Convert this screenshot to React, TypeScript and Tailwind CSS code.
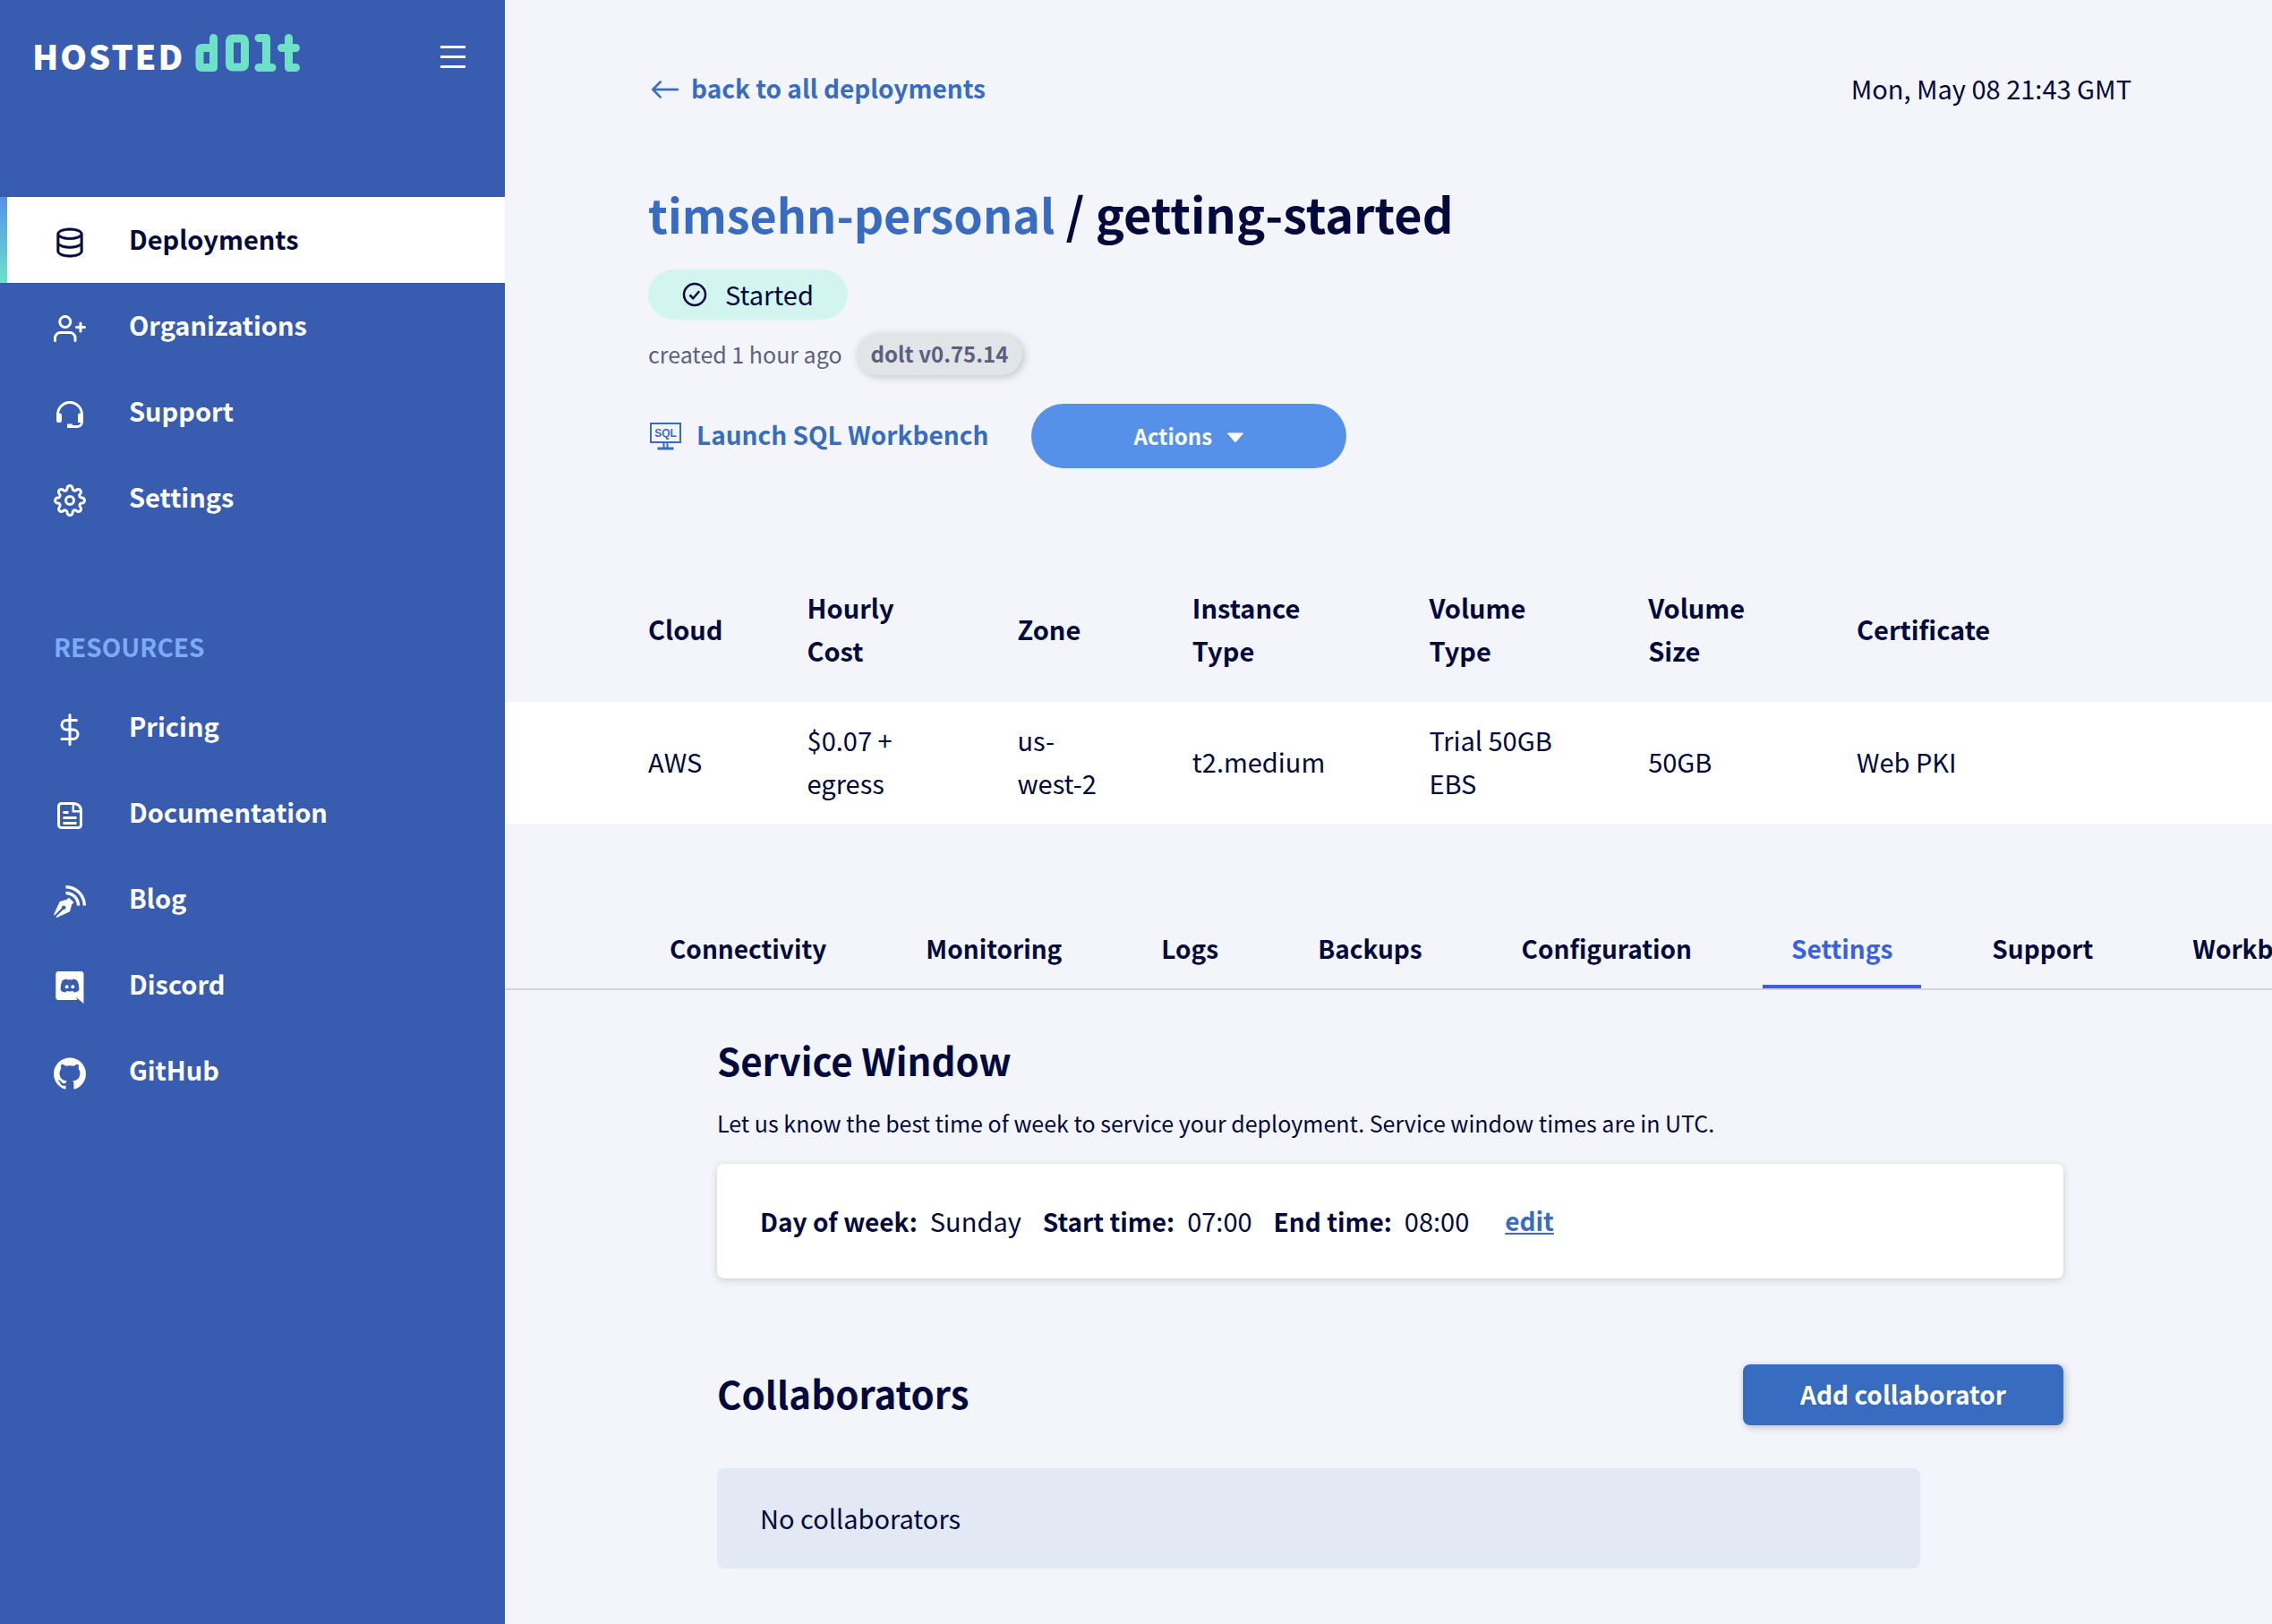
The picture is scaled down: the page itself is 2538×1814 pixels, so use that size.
import type { ReactNode } from "react";
import { BsArrowLeft } from "react-icons/bs";
import { FiDollarSign, FiSettings, FiUserPlus } from "react-icons/fi";
import { GoDatabase } from "react-icons/go";
import { ImBlog } from "react-icons/im";
import { SiGithub } from "react-icons/si";

function HeadsetIcon() {
  return (
    <svg viewBox="0 0 24 24" className="size-9" fill="none" stroke="currentColor" strokeWidth="1.900">
      <path d="M3 12.500V12a9 9 0 0 1 18 0v5.500c0 2-1.300 3.500-3.500 3.500H13.500" />
      <path d="M2 11h2.500q1.500 0 1.500 1.500v4q0 1.500-1.500 1.500h-1q-1.500 0-1.500-1.500z" fill="currentColor" stroke="none" />
      <path d="M22 11h-2.500q-1.500 0-1.500 1.500V18h2.500q1.500 0 1.500-1.500z" fill="currentColor" stroke="none" />
      <path d="M10 19h4v3h-4z" fill="currentColor" stroke="none" />
    </svg>
  );
}

function DocumentIcon() {
  return (
    <svg viewBox="0 0 24 24" className="size-9" fill="none" stroke="currentColor" strokeWidth="2">
      <path d="M5.700 3H15q5.300.5 5.300 5.500V19a2 2 0 0 1-2 2H5.700a2 2 0 0 1-2-2V5a2 2 0 0 1 2-2z" />
      <path d="M14.500 3v5.800h5.800" strokeWidth="1.600" />
      <path d="M7 9.700h4M7 13.700h10M7 17.700h10" />
    </svg>
  );
}

function DiscordIcon() {
  return (
    <svg viewBox="0 0 24 24" className="size-9" fill="currentColor">
      <path
        fillRule="evenodd"
        d="M3.500 0h17A2 2 0 0 1 22.300 2V24l-5.500-4.600.7 2H3.700A2.200 2.200 0 0 1 1.500 19.200V2.200A2.200 2.200 0 0 1 3.500 0zM9.800 5.700c-1.300.1-2.500.6-3.300 1.200C5.400 9 5 11.200 5.100 13.900c.8 1.200 2.100 1.800 3.700 1.800l.8-1c1.500.4 3.300.4 4.800 0l.8 1c1.600 0 2.900-.6 3.700-1.800.1-2.700-.3-4.900-1.400-7-.8-.6-2-1.100-3.300-1.200l-.4.6c-1.100-.2-2.500-.2-3.600 0z"
      />
      <circle cx="9.800" cy="11.500" r="1.300" />
      <circle cx="14.200" cy="11.500" r="1.300" />
    </svg>
  );
}

function CheckCircleIcon() {
  return (
    <svg viewBox="0 0 28 28" className="size-7" fill="none" stroke="currentColor" strokeWidth="2.500">
      <circle cx="14" cy="14" r="12" />
      <path d="M8.500 14.500l3.700 3.700 7-8" />
    </svg>
  );
}

function SqlMonitorIcon() {
  return (
    <svg viewBox="0 0 38 32" className="h-8 w-[38px]" fill="none" stroke="currentColor" strokeWidth="2">
      <path d="M3 2h33v21H3zM17.500 23v6M21.500 23v6" />
      <path d="M10.500 30h18" strokeWidth="3" />
      <text
        x="19.500"
        y="16.500"
        textAnchor="middle"
        fontSize="12"
        fontWeight="700"
        fill="currentColor"
        stroke="none"
        fontFamily="Liberation Sans, sans-serif"
      >
        SQL
      </text>
    </svg>
  );
}

function DoltMark() {
  return (
    <svg
      viewBox="0 0 118 42"
      className="mt-0.5 h-[42px] w-[118px] text-[#6de2c6]"
      role="img"
      aria-label="dolt"
      fill="none"
      stroke="currentColor"
      strokeWidth="9"
      strokeLinecap="round"
      strokeLinejoin="round"
    >
      <path d="M20.500 4.500v33h-13q-2.500 0-2.500-2.500V18q0-2.500 2.500-2.500h13" />
      <path d="M42 5h10q3.500 0 3.500 3.500v25q0 3.500-3.500 3.500H42q-3.500 0-3.500-3.500v-25Q38.500 5 42 5z" />
      <path d="M71 4.500h8.500v33M71 37.500h15" />
      <path d="M104.500 4.500v33h8M96.500 15.500h16" />
    </svg>
  );
}

type NavItem = { label: string; icon: ReactNode; active?: boolean };

const mainNav: NavItem[] = [
  { label: "Deployments", icon: <GoDatabase className="size-9" strokeWidth="0.5" />, active: true },
  { label: "Organizations", icon: <FiUserPlus className="size-9" /> },
  { label: "Support", icon: <HeadsetIcon /> },
  { label: "Settings", icon: <FiSettings className="size-9" /> },
];

const resourceNav: NavItem[] = [
  { label: "Pricing", icon: <FiDollarSign className="size-9" /> },
  { label: "Documentation", icon: <DocumentIcon /> },
  { label: "Blog", icon: <ImBlog className="size-9" /> },
  { label: "Discord", icon: <DiscordIcon /> },
  { label: "GitHub", icon: <SiGithub className="size-9" /> },
];

function NavList({ items }: { items: NavItem[] }) {
  return (
    <ul>
      {items.map((item) => (
        <li key={item.label}>
          <a
            href="#"
            aria-current={item.active ? "page" : undefined}
            className={
              item.active
                ? "flex h-24 items-center bg-white text-[#020a3d]"
                : "flex h-24 items-center text-white"
            }
          >
            <span
              className={
                item.active
                  ? "h-full w-2 bg-linear-to-b from-[#5590e9] to-[#6de2c6]"
                  : "h-full w-2"
              }
            />
            <span className="mr-12 ml-[52px] pt-1.5">{item.icon}</span>
            <span className="pb-1 text-[29px] leading-[48px] font-bold">{item.label}</span>
          </a>
        </li>
      ))}
    </ul>
  );
}

function Sidebar() {
  return (
    <aside className="w-[564px] shrink-0 bg-[#385cb0]">
      <div className="flex h-[220px] items-start justify-between pt-9 pr-11 pl-9">
        <a href="#" className="flex items-start gap-3 text-white">
          <span className="pt-0.5 text-[38px] leading-[48px] font-black tracking-wider">HOSTED</span>
          <DoltMark />
        </a>
        <button type="button" aria-label="Toggle menu" className="mt-[15px] flex flex-col gap-2">
          <span className="h-[3px] w-7 bg-white" />
          <span className="h-[3px] w-7 bg-white" />
          <span className="h-[3px] w-7 bg-white" />
        </button>
      </div>
      <nav aria-label="Main">
        <NavList items={mainNav} />
      </nav>
      <nav aria-label="Resources">
        <h2 className="mt-[94px] mb-[18px] pl-[60px] text-[28px] leading-[48px] font-bold text-[#7bacf5]">
          RESOURCES
        </h2>
        <NavList items={resourceNav} />
      </nav>
    </aside>
  );
}

const columns = [
  { name: "Cloud", value: "AWS", cell: "w-[17.1%] pr-20 pl-40" },
  { name: "Hourly Cost", value: "$0.07 + egress", cell: "w-[11.9%] pr-20" },
  { name: "Zone", value: "us-west-2", cell: "w-[9.9%] pr-24" },
  { name: "Instance Type", value: "t2.medium", cell: "w-[13.4%] pr-20" },
  { name: "Volume Type", value: "Trial 50GB EBS", cell: "w-[12.4%] pr-20" },
  { name: "Volume Size", value: "50GB", cell: "w-[11.8%] pr-20" },
  { name: "Certificate", value: "Web PKI", cell: "pr-20" },
];

function DetailsTable() {
  return (
    <table className="mt-[131px] w-full table-fixed text-left text-[29px] leading-[48px]">
      <thead>
        <tr>
          {columns.map((c) => (
            <th key={c.name} scope="col" className={c.cell + " pb-[34px] align-middle font-bold"}>
              {c.name}
            </th>
          ))}
        </tr>
      </thead>
      <tbody>
        <tr className="bg-white">
          {columns.map((c) => (
            <td key={c.name} className={c.cell + " pt-[18px] pb-[22px] align-middle"}>
              {c.value}
            </td>
          ))}
        </tr>
      </tbody>
    </table>
  );
}

const tabs = [
  "Connectivity",
  "Monitoring",
  "Logs",
  "Backups",
  "Configuration",
  "Settings",
  "Support",
  "Workbench",
];

function Tabs() {
  return (
    <nav
      aria-label="Deployment"
      className="mt-[115px] flex gap-[47px] overflow-hidden border-b-2 border-[#d3d5dd] pl-[152px]"
    >
      {tabs.map((tab) => (
        <a
          key={tab}
          href="#"
          className={
            tab === "Settings"
              ? "shrink-0 border-b-4 border-[#3860e4] px-8 pb-[17px] text-[28px] leading-[48px] font-bold text-[#3860e4]"
              : "shrink-0 border-b-4 border-transparent px-8 pb-[17px] text-[28px] leading-[48px] font-bold"
          }
        >
          {tab}
        </a>
      ))}
    </nav>
  );
}

function ServiceWindow() {
  return (
    <section>
      <h2 className="text-[42px] leading-[60px] font-bold">Service Window</h2>
      <p className="mt-5 text-[25px] leading-10">
        Let us know the best time of week to service your deployment. Service window times are in UTC.
      </p>
      <div className="mt-[26px] flex h-32 items-center rounded-lg bg-white px-12 pb-0.5 text-[29px] leading-[48px] shadow-[0_2px_8px_rgba(30,50,70,0.2)]">
        <dl className="flex gap-6">
          <div className="flex items-baseline gap-3.5">
            <dt className="text-[28px] font-bold">Day of week:</dt>
            <dd>Sunday</dd>
          </div>
          <div className="flex items-baseline gap-3.5">
            <dt className="text-[28px] font-bold">Start time:</dt>
            <dd>07:00</dd>
          </div>
          <div className="flex items-baseline gap-3.5">
            <dt className="text-[28px] font-bold">End time:</dt>
            <dd>08:00</dd>
          </div>
        </dl>
        <a href="#" className="ml-10 text-[28px] font-bold text-[#376cc0] underline">
          edit
        </a>
      </div>
    </section>
  );
}

function Collaborators() {
  return (
    <section className="mt-24">
      <div className="flex items-center justify-between">
        <h2 className="pb-1 text-[42px] leading-[60px] font-bold">Collaborators</h2>
        <button
          type="button"
          className="h-[68px] rounded-lg bg-[#376cc0] px-16 pb-0.5 text-[28px] leading-[48px] font-bold text-white shadow-[2px_2px_8px_rgba(30,50,70,0.3)]"
        >
          Add collaborator
        </button>
      </div>
      <p className="mt-12 mr-40 flex h-28 items-center rounded-lg bg-[#e2e9f5] px-12 pb-0.5 text-[29px] leading-[48px]">
        No collaborators
      </p>
    </section>
  );
}

export default function App() {
  return (
    <div className="flex min-h-screen bg-[#f4f5fa] font-['Noto_Sans_CJK_SC','Source_Sans_Pro',sans-serif] text-[#020a3d]">
      <Sidebar />
      <main className="min-w-0 flex-1 pt-[74px]">
        <header className="pr-[157px] pl-40">
          <div className="flex items-center justify-between text-[29px] leading-[48px]">
            <a href="#" className="flex items-center gap-3 text-[28px] font-bold text-[#376cc0]">
              <BsArrowLeft className="mt-1 ml-0.5 size-[34px]" strokeWidth="0.3" />
              back to all deployments
            </a>
            <time>Mon, May 08 21:43 GMT</time>
          </div>
          <h1 className="mt-20 text-[54px] leading-[72px] font-bold">
            <a href="#" className="text-[52px] text-[#376cc0]">
              timsehn-personal
            </a>{" "}
            / getting-started
          </h1>
          <div className="mt-[26px] flex">
            <span className="flex h-14 items-center gap-5 rounded-full bg-[#d3f5ef] px-[38px] text-[29px] leading-[48px]">
              <CheckCircleIcon />
              <span className="pb-0.5">Started</span>
            </span>
          </div>
          <div className="mt-4 flex items-center gap-4 text-[25px] leading-[44px] text-[#5c6080]">
            <span className="pb-0.5">created 1 hour ago</span>
            <span className="rounded-full bg-[#e1e5e8] px-4 pb-0.5 text-[24px] font-bold shadow-[2px_2px_8px_rgba(30,50,70,0.25)]">
              dolt v0.75.14
            </span>
          </div>
          <div className="mt-8 flex items-center gap-12">
            <a href="#" className="flex items-center gap-4 text-[28px] leading-[48px] font-bold text-[#376cc0]">
              <SqlMonitorIcon />
              <span className="pb-1">Launch SQL Workbench</span>
            </a>
            <button
              type="button"
              className="flex h-[72px] w-[352px] items-center justify-center gap-4 rounded-full bg-[#5590e9] text-[24px] font-bold text-white"
            >
              Actions
              <svg viewBox="0 0 20 12" className="mt-1 h-3 w-5" fill="currentColor">
                <path d="M1.500 1h17L10 11z" stroke="currentColor" strokeWidth="1" strokeLinejoin="round" />
              </svg>
            </button>
          </div>
        </header>
        <DetailsTable />
        <Tabs />
        <div className="pt-12 pr-[233px] pl-[237px]">
          <ServiceWindow />
          <Collaborators />
        </div>
      </main>
    </div>
  );
}
